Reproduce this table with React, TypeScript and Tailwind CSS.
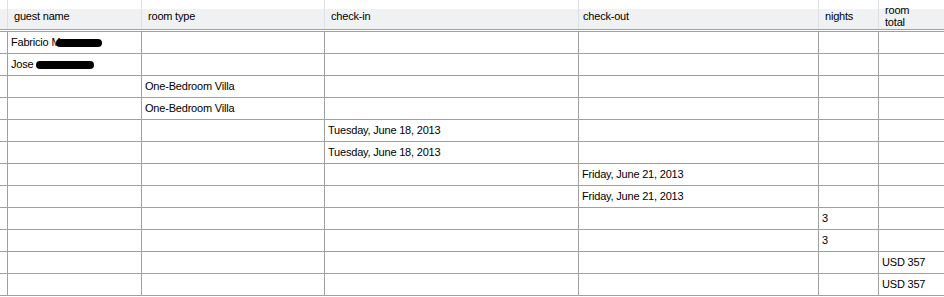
const cols = "grid grid-cols-[7px_134px_183px_254px_240px_60px_66px]";

type Row = string[];

const rows: Row[] = [
  ["Fabricio M", "", "", "", "", ""],
  ["Jose ", "", "", "", "", ""],
  ["", "One-Bedroom Villa", "", "", "", ""],
  ["", "One-Bedroom Villa", "", "", "", ""],
  ["", "", "Tuesday, June 18, 2013", "", "", ""],
  ["", "", "Tuesday, June 18, 2013", "", "", ""],
  ["", "", "", "Friday, June 21, 2013", "", ""],
  ["", "", "", "Friday, June 21, 2013", "", ""],
  ["", "", "", "", "3", ""],
  ["", "", "", "", "3", ""],
  ["", "", "", "", "", "USD 357"],
  ["", "", "", "", "", "USD 357"],
];

const headers = ["guest name", "room type", "check-in", "check-out", "nights", "room total"];

// black marker scribble over the surnames
function Redacted({ w, ml }: { w: number; ml: number }) {
  return (
    <span
      className="inline-block h-[8px] rounded-full bg-black align-middle"
      style={{ width: w, marginLeft: ml }}
    />
  );
}

export default function App() {
  return (
    <div
      className="w-[944px] h-[297px] overflow-hidden bg-white text-[11px] tracking-[-0.2px] text-black"
      style={{ fontFamily: '"Liberation Sans", Arial, sans-serif' }}
    >
      {/* column headers */}
      <div className={`${cols} h-[30px] bg-gradient-to-b from-white from-30% to-[#f0f1f3] to-30% border-b border-[#a0a0a0]`}>
        <div />
        {headers.map((h, i) => (
          <div
            key={h}
            className={`border-l border-[#dde1e6] flex items-center leading-[12px] pt-[2px] ${
              i === 5 ? "pl-[6px] pr-8" : i === 3 ? "pl-[4px]" : "pl-[6px]"
            }`}
          >
            {h}
          </div>
        ))}
      </div>
      <div className="h-[2px] border-b border-[#a0a0a0]" />

      {/* data rows */}
      {rows.map((r, ri) => (
        <div key={ri} className={`${cols} h-[22px] border-b border-[#a0a0a0]`}>
          <div />
          {r.map((c, ci) => (
            <div
              key={ci}
              className="border-l border-[#a0a0a0] flex items-center pl-[3px] whitespace-pre overflow-hidden"
            >
              {c}
              {ri === 0 && ci === 0 && <Redacted w={46} ml={-4} />}
              {ri === 1 && ci === 0 && <Redacted w={58} ml={0} />}
            </div>
          ))}
        </div>
      ))}
    </div>
  );
}
